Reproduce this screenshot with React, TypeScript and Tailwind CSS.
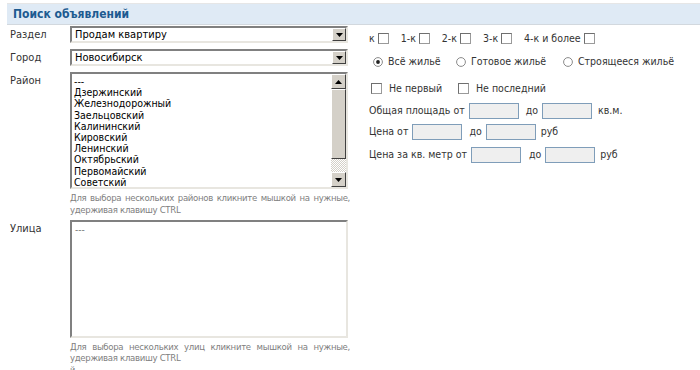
import React from "react";

const font = "font-['DejaVu_Sans_Condensed','DejaVu_Sans',sans-serif]";

const districts = [
  "---",
  "Дзержинский",
  "Железнодорожный",
  "Заельцовский",
  "Калининский",
  "Кировский",
  "Ленинский",
  "Октябрьский",
  "Первомайский",
  "Советский",
];

function Arrow({ up }: { up?: boolean }) {
  return (
    <svg width="7" height="4" viewBox="0 0 7 4">
      {up ? <path d="M3.5 0 L7 4 L0 4 Z" fill="#000" /> : <path d="M0 0 L7 0 L3.5 4 Z" fill="#000" />}
    </svg>
  );
}

function ScrollBtn({ up }: { up?: boolean }) {
  return (
    <div className="w-[15px] h-[15px] bg-[#d4d0c8] border border-t-white border-l-white border-r-[#404040] border-b-[#404040] flex items-center justify-center">
      <Arrow up={up} />
    </div>
  );
}

function Select({ value }: { value: string }) {
  return (
    <div className="w-[278px] h-[17px] border-2 border-t-[#808080] border-l-[#808080] border-r-[#e8e6e0] border-b-[#e8e6e0] bg-white flex items-center">
      <div className="flex-1 pl-[3px] text-[11px] text-black leading-none">{value}</div>
      <div className="w-[14px] h-[13px] bg-[#d4d0c8] border border-t-white border-l-white border-r-[#404040] border-b-[#404040] flex items-center justify-center">
        <Arrow />
      </div>
    </div>
  );
}

function Check({ className = "" }: { className?: string }) {
  return <span className={"inline-block w-[11px] h-[11px] border border-[#9a9a9a] border-t-[#6f6f6f] border-l-[#6f6f6f] bg-white " + className} />;
}

function Radio({ on }: { on?: boolean }) {
  return (
    <svg width="10" height="10" viewBox="0 0 10 10">
      <circle cx="5" cy="5" r="4.4" fill="#fff" stroke="#8a8a8a" strokeWidth="1" />
      {on && <circle cx="5" cy="5" r="1.9" fill="#222" />}
    </svg>
  );
}

function Field() {
  return <span className="inline-block w-[50px] h-[16px] bg-[#efefef] border border-[#7f9db9]" />;
}

export default function App() {
  return (
    <div className={"w-[700px] h-[370px] overflow-hidden bg-white text-[#333] " + font}>
      <div className="ml-[7px] mt-[3px] h-[22px] bg-[#dfeaf5] border-t border-b border-t-[#e6e6e6] border-b-[#d2d8de] flex items-center pl-[6px]">
        <span className="text-[12px] font-bold text-[#1d5b91]">Поиск объявлений</span>
      </div>

      <div className="flex">
        <div className="w-[360px] pl-[10px] text-[11px]">
          <div className="flex mt-[1px] h-[17px]">
            <div className="w-[60px] pt-[1px]">Раздел</div>
            <Select value="Продам квартиру" />
          </div>
          <div className="flex mt-[6px] h-[17px]">
            <div className="w-[60px] pt-[1px]">Город</div>
            <Select value="Новосибирск" />
          </div>
          <div className="flex mt-[6px]">
            <div className="w-[60px] pt-[1px]">Район</div>
            <div>
              <div className="w-[278px] h-[117px] border-2 border-t-[#808080] border-l-[#808080] border-r-[#e8e6e0] border-b-[#e8e6e0] bg-white flex">
                <div className="flex-1 pl-[2px] pt-[2px] text-black text-[10.5px] leading-[11.2px]">
                  {districts.map((d) => (
                    <div key={d}>{d}</div>
                  ))}
                </div>
                <div className="w-[15px] flex flex-col">
                  <ScrollBtn up />
                  <div className="h-[70px] bg-[#d4d0c8] border border-t-white border-l-white border-r-[#404040] border-b-[#404040]" />
                  <div className="flex-1 bg-[repeating-conic-gradient(#d4d0c8_0_25%,#ffffff_0_50%)] bg-[length:2px_2px]" />
                  <ScrollBtn />
                </div>
              </div>
              <div className="w-[280px] mt-[3px] text-[9.5px] tracking-[-0.3px] leading-[12px] text-[#808080] text-justify">
                Для выбора нескольких районов кликните мышкой на нужные, удерживая клавишу CTRL
              </div>
            </div>
          </div>
          <div className="flex mt-[4px]">
            <div className="w-[60px] pt-[1px]">Улица</div>
            <div>
              <div className="w-[278px] h-[118px] border-2 border-t-[#808080] border-l-[#808080] border-r-[#e8e6e0] border-b-[#e8e6e0] bg-white pl-[3px] pt-[2px] text-[10px] text-[#808080] leading-[12px]">
                ---
              </div>
              <div className="w-[280px] mt-[3px] text-[9.5px] tracking-[-0.3px] leading-[11px] text-[#808080] text-justify">
                Для выбора нескольких улиц кликните мышкой на нужные, удерживая клавишу CTRL
              </div>
              <div className="text-[9px] leading-[9px] text-[#808080] mt-[3px]">й</div>
            </div>
          </div>
        </div>

        <div className="pl-[9px] text-[10.5px]">
          <div className="flex items-center mt-[7px] h-[13px]">
            <span>к</span>
            <Check className="ml-[3px] mr-[12px]" />
            <span>1-к</span>
            <Check className="ml-[3px] mr-[12px]" />
            <span>2-к</span>
            <Check className="ml-[3px] mr-[12px]" />
            <span>3-к</span>
            <Check className="ml-[3px] mr-[12px]" />
            <span>4-к и более</span>
            <Check className="ml-[3px]" />
          </div>
          <div className="flex items-center mt-[10px] h-[13px] pl-[4px]">
            <div className="w-[83px] flex items-center">
              <Radio on />
              <span className="ml-[5px]">Всё жильё</span>
            </div>
            <div className="w-[107px] flex items-center">
              <Radio />
              <span className="ml-[5px]">Готовое жильё</span>
            </div>
            <div className="flex items-center">
              <Radio />
              <span className="ml-[5px]">Строящееся жильё</span>
            </div>
          </div>
          <div className="flex items-center mt-[14px] h-[13px] pl-[2px]">
            <div className="w-[87px] flex items-center">
              <Check />
              <span className="ml-[7px]">Не первый</span>
            </div>
            <div className="flex items-center">
              <Check />
              <span className="ml-[7px]">Не последний</span>
            </div>
          </div>
          <div className="flex items-center mt-[8px] h-[16px] gap-[4px]">
            <span>Общая площадь от</span>
            <Field />
            <span className="ml-[3px]">до</span>
            <Field />
            <span className="ml-[2px]">кв.м.</span>
          </div>
          <div className="flex items-center mt-[5px] h-[16px] gap-[4px]">
            <span>Цена от</span>
            <Field />
            <span className="ml-[3px]">до</span>
            <Field />
            <span className="ml-[1px]">руб</span>
          </div>
          <div className="flex items-center mt-[7px] h-[16px] gap-[4px]">
            <span>Цена за кв. метр от</span>
            <Field />
            <span className="ml-[4px]">до</span>
            <Field />
            <span className="ml-[1px]">руб</span>
          </div>
        </div>
      </div>
    </div>
  );
}
